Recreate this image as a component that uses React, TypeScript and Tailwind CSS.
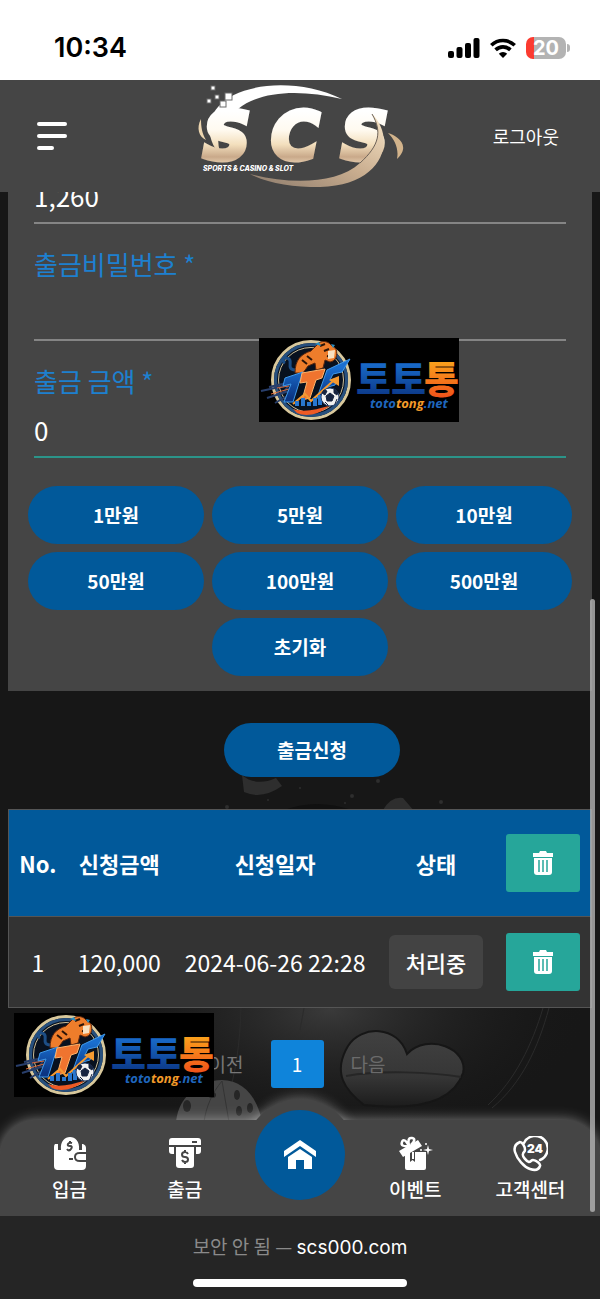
import { ReactNode, useState } from "react";
import clsx from "clsx";

const amounts = [
  { label: "1만원", value: 10000 },
  { label: "5만원", value: 50000 },
  { label: "10만원", value: 100000 },
  { label: "50만원", value: 500000 },
  { label: "100만원", value: 1000000 },
  { label: "500만원", value: 5000000 },
];

const requests = [
  { no: 1, amount: "120,000", date: "2024-06-26 22:28", status: "처리중" },
];

function StatusBar() {
  return (
    <div className="relative z-10 flex h-20 items-center justify-between bg-white pt-4 pr-[30px] pl-[54px] text-black">
      <span className="font-['Inter'] text-[27px] leading-8 font-semibold">10:34</span>
      <div className="flex items-center gap-[10px]">
        <svg width="32" height="20" viewBox="0 0 32 20" fill="currentColor">
          <rect x="0" y="13" width="6" height="7" rx="2" />
          <rect x="8.500" y="9" width="6" height="11" rx="2" />
          <rect x="17" y="5" width="6" height="15" rx="2" />
          <rect x="25.500" y="0" width="6" height="20" rx="2" />
        </svg>
        <svg width="26" height="20" viewBox="0 0 26 20" fill="none" stroke="currentColor" strokeWidth="3.600">
          <path d="M1.300 7.300a16.800 16.800 0 0 1 23.400 0" />
          <path d="M5.600 11.900a10.600 10.600 0 0 1 14.800 0" />
          <path d="M13 20l-4.200-4.300a6.200 6.200 0 0 1 8.400 0z" fill="currentColor" stroke="none" />
        </svg>
        <div className="flex items-center gap-[1px]">
          <div className="flex h-[22px] w-10 items-center justify-center rounded-[7px] bg-linear-to-r from-[#fb3b30] from-20% to-[#b3b3b3] to-20% font-['Inter'] text-[20px] leading-5 font-bold text-white">
            20
          </div>
          <div className="h-2 w-[3px] rounded-r-full bg-[#b3b3b3]" />
        </div>
      </div>
    </div>
  );
}

function ScsLogo() {
  return (
    <svg width="220" height="110" viewBox="0 0 220 110" role="img" aria-label="SCS">
      <defs>
        <linearGradient id="gold" gradientUnits="userSpaceOnUse" x1="0" y1="30" x2="0" y2="84">
          <stop offset="0" stopColor="#fff" />
          <stop offset="0.35" stopColor="#fffaf0" />
          <stop offset="0.62" stopColor="#f3dfbd" />
          <stop offset="0.85" stopColor="#c9a98a" />
          <stop offset="1" stopColor="#e9d2b4" />
        </linearGradient>
        <linearGradient id="swoosh" x1="0" y1="1" x2="1" y2="0">
          <stop offset="0" stopColor="#8c7b6c" />
          <stop offset="0.5" stopColor="#c8ac8e" />
          <stop offset="1" stopColor="#f8e6c8" />
        </linearGradient>
      </defs>
      <path d="M36 79C20 62 16 42 30 26C50 2 108-4 154 18C112 8 72 10 50 28C30 45 25 60 36 79z" fill="url(#gold)" />
      <path d="M13 38C8 47 11 56 18 59C14 52 13 46 13 38z" fill="#ecd5af" />
      <path d="M200 52C208 54 224 64 209 78C211 68 207 59 200 52z" fill="#d2b38b" />
      <g
        fontFamily="DejaVu Sans, sans-serif"
        fontWeight="700"
        fontStyle="italic"
        fontSize="66"
        fill="url(#gold)"
        stroke="url(#gold)"
        strokeWidth="5"
      >
        <text x="15" y="78">S</text>
        <text x="83" y="78">C</text>
        <text x="153" y="78">S</text>
      </g>
      <path
        d="M184 33C208 56 198 104 132 106C104 106 80 102 62 93C100 103 148 104 172 82C192 64 194 50 184 33z"
        fill="url(#swoosh)"
      />
      <path d="M184 33C194 50 192 64 172 82" fill="none" stroke="#6d6257" />
      <g fill="#fff" stroke="#6b6b6b">
        <rect x="23" y="5" width="4" height="4" />
        <rect x="27" y="14" width="4" height="4" />
        <rect x="19" y="18" width="4" height="4" />
        <rect x="37" y="12" width="7" height="7" />
        <rect x="32" y="20" width="6" height="6" />
      </g>
      <text x="15" y="90" fill="#fff" fontFamily="Inter, sans-serif" fontSize="7" fontWeight="800" fontStyle="italic">
        SPORTS &amp; CASINO &amp; SLOT
      </text>
    </svg>
  );
}

function TotoBanner({ id, className }: { id: string; className?: string }) {
  return (
    <svg
      viewBox="0 0 200 84"
      className={clsx("absolute h-[84px] w-[200px] bg-black", className)}
      role="img"
      aria-label="토토통"
    >
      <defs>
        <linearGradient id={id + "b"} x1="0" y1="0" x2="0" y2="1">
          <stop offset="0.2" stopColor="#1a6fd0" />
          <stop offset="0.9" stopColor="#0b3583" />
        </linearGradient>
        <linearGradient id={id + "o"} x1="0" y1="0" x2="0" y2="1">
          <stop offset="0.2" stopColor="#fba51c" />
          <stop offset="0.9" stopColor="#f0501a" />
        </linearGradient>
      </defs>
      <circle cx="52" cy="42" r="38.500" fill="#08111f" stroke="#d8c89c" strokeWidth="3" />
      <circle cx="52" cy="42" r="35.500" fill="none" stroke="#27507e" strokeWidth="3" />
      <circle cx="52" cy="42" r="32.500" fill="none" stroke="#cdbf98" strokeWidth="1" />
      <path d="M38 32C26 32 34 24 30 21C25 17 22 23 26 25" fill="none" stroke="#1d4e86" strokeWidth="3" />
      <path
        d="M36 35C36 22 42 16 52 13L60 5C64 2 70 4 72 7L77 11C79 17 77 23 71 24L66 22L64 30L57 32L56 25L49 28L44 35z"
        fill="#ee7d2b"
        stroke="#5b260d"
      />
      <path d="M61 8L66 6M65 13L70 11M68 18L73 19M48 18L53 22M43 22L48 26" stroke="#2b1408" strokeWidth="2" />
      <path d="M69 13L76 12L75 20L69 21z" fill="#f7e1c2" />
      <path d="M56 6L60 4L62 8M72 6L76 7L74 10" fill="#2b8fc2" />
      <path d="M2 53L30 47L24 55M8 60L30 53M10 49L28 45M16 65L30 57" fill="none" stroke="#283e6b" strokeWidth="2" />
      <path d="M12 56L30 51M18 50L30 48" stroke="#d8693b" strokeWidth="1" />
      <path
        d="M26 40L44 34L40 45L34 64H25L32 46L24 48z M68 32L91 21L83 34L74 36L71 42L79 40L76 47L69 49L65 60H58z"
        fill={`url(#${id}b)`}
        stroke="#3f99ea"
      />
      <path d="M43 35L66 31L63 40L57 42L51 60L43 62L48 44L41 45z" fill="#ef742f" stroke="#ffb36a" />
      <path d="M34 66L46 56L52 63L74 43" fill="none" stroke="#f59a31" strokeWidth="2" />
      <path d="M70 42L80 38L80 48z" fill="#f59a31" />
      <path d="M38 68v-5M44 68v-8M50 68v-4M56 68v-8M61 67v-10" stroke="#2977d0" strokeWidth="4" />
      <path d="M34 71C46 75 58 71 70 68C60 77 46 79 38 75z" fill="#ee5a24" />
      <circle cx="71" cy="59" r="9" fill="#f1f1f1" stroke="#27406c" />
      <path d="M71 55l4 3-2 5h-5l-1-5zM63 55l2-3 3 1-2 4zM75 51l4 3-1 3-3-2zM66 64l3 3M78 61l-2 5" fill="#16233f" stroke="#16233f" />
      <g fontFamily="Noto Sans CJK KR, sans-serif" fontWeight="900" fontSize="38">
        <text x="97" y="55" fill={`url(#${id}b)`}>토토</text>
        <text x="165" y="55" fill={`url(#${id}o)`}>통</text>
      </g>
      <text x="111" y="70" fontFamily="Open Sans, sans-serif" fontWeight="700" fontStyle="italic" fontSize="13" fill="#1f66bd">
        toto<tspan fill="#f39a2a">tong</tspan>.net
      </text>
    </svg>
  );
}

// cards, dice and chips that show faintly behind the page
function Backdrop() {
  return (
    <svg
      viewBox="0 -27 600 947"
      preserveAspectRatio="xMidYMax slice"
      className="absolute inset-0 h-full w-full"
      aria-hidden="true"
    >
      <defs>
        <radialGradient id="haze">
          <stop offset="0" stopColor="#3a3a3a" />
          <stop offset="1" stopColor="#171717" stopOpacity="0" />
        </radialGradient>
        <linearGradient id="heart" x1="0" y1="0" x2="0" y2="1">
          <stop offset="0" stopColor="#414141" />
          <stop offset="0.6" stopColor="#363636" />
          <stop offset="1" stopColor="#1c1c1c" />
        </linearGradient>
      </defs>
      <ellipse cx="330" cy="810" rx="260" ry="130" fill="url(#haze)" />
      <g fill="#2e2e2e">
        <path d="M242 575q14 12 34 3l6 8q-20 14-38 6z" />
        <path d="M383 610q8-14 20-12l12 14z" />
        <circle cx="352" cy="596" r="2" />
        <circle cx="378" cy="581" r="2" />
        <circle cx="268" cy="600" r="1" />
        <circle cx="300" cy="588" r="1" />
        <circle cx="345" cy="603" r="1" />
        <circle cx="441" cy="602" r="2" />
        <circle cx="227" cy="607" r="2" />
      </g>
      <path d="M284 610q32-12 68 0z" fill="#101010" />
      <g fill="none" stroke="#2b2b2b">
        <path d="M543 808C532 845 515 880 488 905M549 808C538 848 522 883 492 908" />
        <path d="M241 808C240 843 236 873 226 905M304 808L300 830" />
      </g>
      <path
        d="M407 854C398 825 361 825 348 846C332 873 345 890 364 905C410 910 452 905 463 873C469 849 428 832 407 854z"
        fill="url(#heart)"
        stroke="#161616"
        strokeWidth="2"
      />
      <path d="M346 876C380 870 430 872 461 877" fill="none" stroke="#262626" strokeWidth="2" />
      <path d="M176 922C178 899 196 881 222 880C244 880 258 899 262 922z" fill="#454545" />
      <path d="M222 881L229 922M222 881C212 893 206 907 204 922" stroke="#343434" fill="none" />
      <g fill="#262626">
        <ellipse cx="187" cy="906" rx="4" ry="6" />
        <ellipse cx="212" cy="895" rx="4" ry="3" />
        <ellipse cx="237" cy="895" rx="3" ry="5" />
        <ellipse cx="250" cy="908" rx="3" ry="5" />
        <ellipse cx="239" cy="911" rx="3" ry="5" />
      </g>
    </svg>
  );
}

function TrashIcon() {
  return (
    <svg width="22" height="26" viewBox="0 0 22 26" className="mx-auto">
      <path d="M1 3h6l1-2h6l1 2h6v4H1z" fill="#fff" />
      <path d="M2 8h18v14q0 3-3 3H5q-3 0-3-3z" fill="#fff" />
      <path d="M7 10v12M11 10v12M15 10v12" stroke="#26a69a" strokeWidth="1.500" />
    </svg>
  );
}

function TrashButton() {
  return (
    <button type="button" aria-label="삭제" className="block h-[58px] w-[74px] rounded-[3px] bg-[#26a69a]">
      <TrashIcon />
    </button>
  );
}

function Field({ id, label, children }: { id: string; label: string; children: ReactNode }) {
  return (
    <div className="relative pt-[22px]">
      <label htmlFor={id} className="block text-[26px] leading-9 text-[#1d80cf]">
        {label}
      </label>
      {children}
    </div>
  );
}

const inputClass = "block h-[51px] w-full bg-transparent pb-1 text-[26px] text-white outline-none";
const pillClass = "rounded-full bg-[#01599a] text-[19px] font-bold text-white";

function NavItem({ label, children }: { label: string; children: ReactNode }) {
  return (
    <a href="#" className="flex flex-col items-center gap-[3px] pt-[16px] text-[19px] leading-7 font-medium text-white">
      <svg width="36" height="36" viewBox="0 0 36 36" fill="#fff">
        {children}
      </svg>
      {label}
    </a>
  );
}

function BottomNav() {
  return (
    <nav className="relative z-10 h-24 rounded-t-[36px] bg-[#454545] shadow-[0_0_14px_rgba(255,255,255,0.45)]">
      <div className="absolute -top-[21px] left-1/2 h-28 w-28 -translate-x-1/2 rounded-full bg-[#454545] shadow-[0_-2px_12px_rgba(255,255,255,0.3)] [clip-path:inset(-20px_-20px_91px_-20px)]" />
      <div className="relative grid grid-cols-5 px-3">
        <NavItem label="입금">
          <path d="M3 8h3v6h3C8 5 13 1 18 1s10 4 9 13h3V8h1q3 1 3 4v4h-6q-6 0-6 5t6 5h6v4q0 4-4 4H6q-4 0-4-4V11q0-2 1-3z" />
          <path d="M27 18h7v6h-7q-3 0-3-3t3-3z" />
          <rect x="17" y="22" width="4" height="2" fill="#454545" />
          <path d="M20 7q-3-1-4 1t2 2 1 3-4 0M18 5v2M18 13v2" fill="none" stroke="#454545" strokeWidth="2" />
        </NavItem>
        <NavItem label="출금">
          <path d="M5 2h26q3 0 3 3v4H2V5q0-3 3-3z" />
          <rect x="25" y="5" width="5" height="2" fill="#454545" />
          <path d="M2 11h5v7H5q-3 0-3-3zM29 11h5v4q0 3-3 3h-2z" />
          <path d="M9 11h18v18q0 3-3 3H12q-3 0-3-3z" />
          <path d="M21 18q-1-2-3-2-3 0-3 2.500T18 21t3 2.500-3 2.500q-2 0-3-2M18 14v2M18 26v2" fill="none" stroke="#454545" strokeWidth="2" />
        </NavItem>
        <a href="#" aria-label="홈" className="-mt-[10px] flex h-[90px] w-[90px] items-center justify-center justify-self-center rounded-full bg-[#01599a]">
          <svg width="34" height="30" viewBox="0 0 34 30" fill="#fff">
            <path d="M17 0l16 11v6L17 6 1 17v-6z" />
            <path d="M17 9l12 8v12h-8v-9h-8v9H5V17z" />
          </svg>
        </a>
        <NavItem label="이벤트">
          <path d="M2 15L21 4l4 6L6 21z" />
          <path d="M12 10Q3 11 5 6t7 4Q10 1 15 2t-1 7" fill="none" stroke="#fff" strokeWidth="2.500" />
          <path d="M8 18l5-2v10l2.500-2 2.500 2V16h11v16q0 2-2 2H10q-2 0-2-2z" />
          <path d="M15 16h2v7h-2z" />
          <path d="M31 9l1 4 4 1-4 1-1 4-1-4-4-1 4-1z" />
          <circle cx="29" cy="8" r="1" />
          <circle cx="24" cy="14" r="1" />
        </NavItem>
        <NavItem label="고객센터">
          <g fill="none" stroke="#fff" strokeWidth="2.500" strokeLinecap="round" strokeLinejoin="round">
            <path d="M8 6Q1 9 3 16c2 7 9 15 15 17 6 2 9 0 10-3 1-2-4-6-7-6-2 0-2 2-4 2-3-1-7-6-6-8 0-2 2-2 2-4 0-4-3-8-5-8z" />
            <path d="M12 7a12.500 12.500 0 1 1 16 17" />
          </g>
          <text x="15" y="17" fontFamily="Inter, sans-serif" fontSize="12" fontWeight="900">
            24
          </text>
        </NavItem>
      </div>
    </nav>
  );
}

export default function App() {
  const [password, setPassword] = useState("");
  const [amount, setAmount] = useState(0);

  return (
    <div className="relative flex min-h-screen flex-col bg-[#171717] font-['Noto_Sans_CJK_KR',sans-serif] text-white">
      <StatusBar />
      <header className="relative z-10 grid h-28 grid-cols-[1fr_auto_1fr] items-center bg-[#454545] pr-[41px] pl-[37px]">
        <button type="button" aria-label="메뉴" className="flex w-[30px] flex-col gap-[8px]">
          <span className="h-1 w-[30px] rounded-full bg-white" />
          <span className="h-1 w-[30px] rounded-full bg-white" />
          <span className="h-1 w-[17px] rounded-full bg-white" />
        </button>
        <ScsLogo />
        <a href="#" className="justify-self-end text-[18px]">
          로그아웃
        </a>
      </header>

      <main className="relative px-2">
        <Backdrop />

        <form className="relative" onSubmit={(e) => e.preventDefault()}>
          <div className="-mt-[19px] bg-[#454545] px-5 pb-[15px]">
            <div className="px-[6px]">
              <input
                aria-label="보유금액"
                readOnly
                value="1,260"
                className={clsx(inputClass, "border-b-2 border-b-[#858585]")}
              />
              <Field id="password" label="출금비밀번호 *">
                <input
                  id="password"
                  type="password"
                  value={password}
                  onChange={(e) => setPassword(e.target.value)}
                  className={clsx(inputClass, "mt-2 border-b-2 border-b-[#858585]")}
                />
              </Field>
              <Field id="amount" label="출금 금액 *">
                <input
                  id="amount"
                  value={amount.toLocaleString()}
                  onChange={(e) => setAmount(Number(e.target.value.replace(/\D/g, "")))}
                  className={clsx(inputClass, "mt-2 border-b-2 border-b-[#2b9489]")}
                />
                <TotoBanner id="top" className="-top-[3px] left-[225px]" />
              </Field>
            </div>
            <div className="mt-7 grid grid-cols-3 gap-2">
              {amounts.map((item) => (
                <button
                  key={item.value}
                  type="button"
                  onClick={() => setAmount(amount + item.value)}
                  className={clsx(pillClass, "h-[58px]")}
                >
                  {item.label}
                </button>
              ))}
              <button type="button" onClick={() => setAmount(0)} className={clsx(pillClass, "col-start-2 h-[58px]")}>
                초기화
              </button>
            </div>
          </div>
          <div className="flex justify-center py-8 pl-6">
            <button type="submit" className={clsx(pillClass, "h-[54px] w-44")}>
              출금신청
            </button>
          </div>
        </form>

        <table className="relative w-full border-collapse border border-[#555] text-center text-[22px]">
          <thead>
            <tr className="h-[107px] border-b border-[#555] bg-[#01599a]">
              <th className="w-[10%] font-bold">No.</th>
              <th className="w-[18%] font-bold">신청금액</th>
              <th className="font-bold">신청일자</th>
              <th className="w-[115px] font-bold">상태</th>
              <th className="w-[98px] pl-3">
                <TrashButton />
              </th>
            </tr>
          </thead>
          <tbody>
            {requests.map((row) => (
              <tr key={row.no} className="h-[91px] bg-[#333] text-[23px]">
                <td>{row.no}</td>
                <td>{row.amount}</td>
                <td className="whitespace-nowrap">{row.date}</td>
                <td>
                  <span className="inline-block rounded-md bg-[#434343] px-[17px] py-[10px] text-[22px] leading-[34px] font-medium">
                    {row.status}
                  </span>
                </td>
                <td className="pl-3">
                  <TrashButton />
                </td>
              </tr>
            ))}
          </tbody>
        </table>

        <div className="relative flex items-center justify-center gap-[27px] py-8 pr-[6px] text-[19px]">
          <button type="button" className="text-[#777]">이전</button>
          <button type="button" className="h-12 w-[53px] rounded-[3px] bg-[#0f84da] text-white">1</button>
          <button type="button" className="text-[#6b6b6b]">다음</button>
          <TotoBanner id="bottom" className="top-[5px] left-[6px]" />
        </div>
      </main>

      <BottomNav />

      <footer className="relative z-10 flex flex-1 flex-col items-center bg-[#252525] pt-[15px] pb-[13px]">
        <p className="text-[19px] leading-[30px] text-[#8a8a8a]">
          보안 안 됨 — <span className="font-['Inter'] text-white">scs000.com</span>
        </p>
        <div className="mt-4 h-2 w-[214px] rounded-full bg-white" />
      </footer>

      <div className="absolute right-[5px] bottom-[88px] z-20 h-[613px] w-[5px] rounded-full bg-[#b4b4b4]/80" />
    </div>
  );
}
